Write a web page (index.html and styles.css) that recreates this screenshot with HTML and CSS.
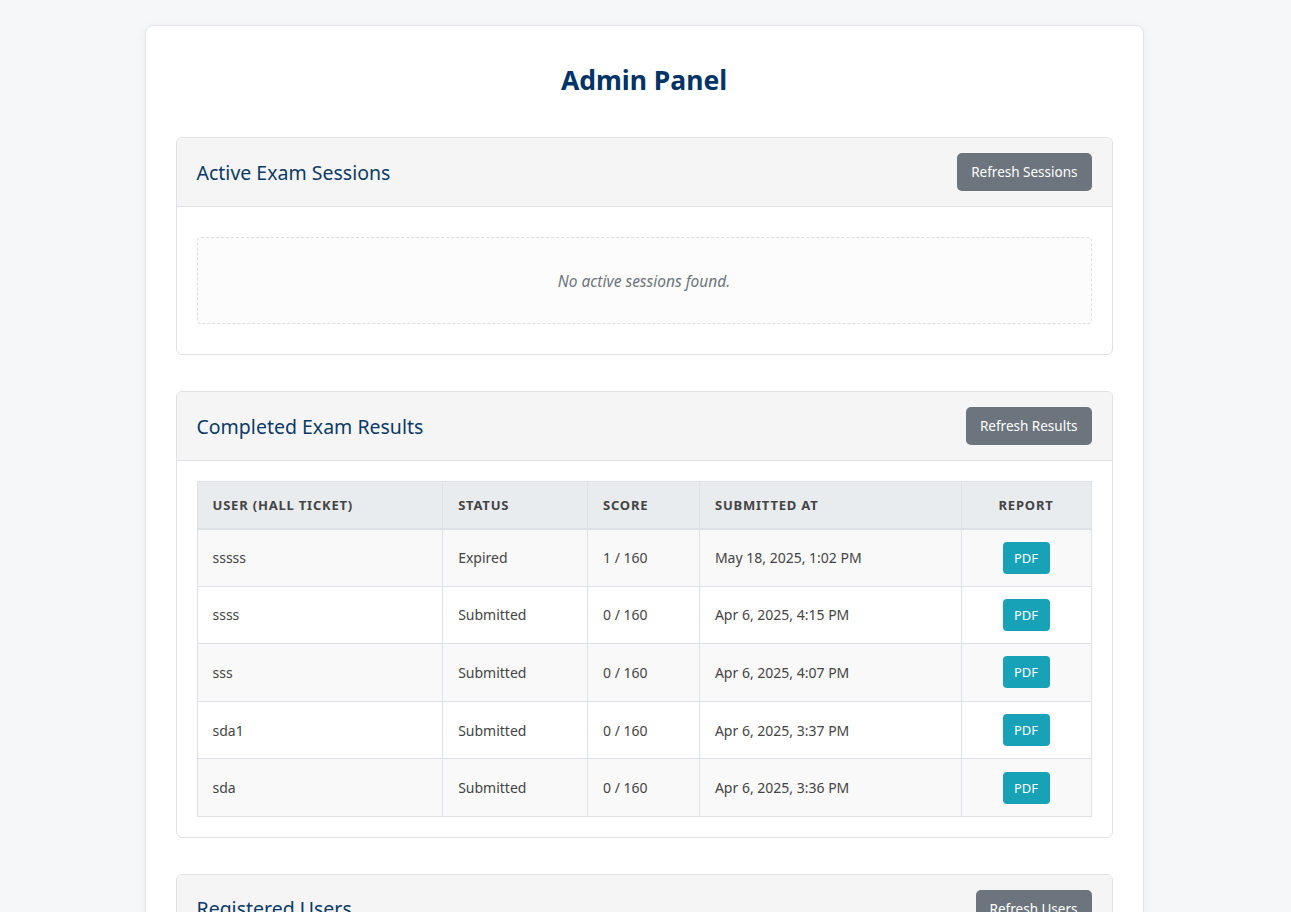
FILE: index.html
```html
<!DOCTYPE html>
<html lang="en">
<head>
<meta charset="utf-8">
<title>Admin Panel</title>
<link rel="stylesheet" href="styles.css">
</head>
<body>
<div class="container">
  <h1 class="page-title">Admin Panel</h1>

  <section class="panel">
    <div class="panel-header">
      <h2 class="panel-title">Active Exam Sessions</h2>
      <button class="btn btn-secondary">Refresh Sessions</button>
    </div>
    <div class="panel-body">
      <div class="empty-box">No active sessions found.</div>
    </div>
  </section>

  <section class="panel">
    <div class="panel-header">
      <h2 class="panel-title">Completed Exam Results</h2>
      <button class="btn btn-secondary">Refresh Results</button>
    </div>
    <div class="panel-body tight">
      <table class="data-table">
        <colgroup>
          <col class="c-user"><col class="c-status"><col class="c-score"><col class="c-date"><col class="c-report">
        </colgroup>
        <thead>
          <tr><th>User (Hall Ticket)</th><th>Status</th><th>Score</th><th>Submitted At</th><th class="center">Report</th></tr>
        </thead>
        <tbody>
          <tr><td>sssss</td><td>Expired</td><td>1 / 160</td><td>May 18, 2025, 1:02 PM</td><td class="center"><button class="btn-pdf">PDF</button></td></tr>
          <tr><td>ssss</td><td>Submitted</td><td>0 / 160</td><td>Apr 6, 2025, 4:15 PM</td><td class="center"><button class="btn-pdf">PDF</button></td></tr>
          <tr><td>sss</td><td>Submitted</td><td>0 / 160</td><td>Apr 6, 2025, 4:07 PM</td><td class="center"><button class="btn-pdf">PDF</button></td></tr>
          <tr><td>sda1</td><td>Submitted</td><td>0 / 160</td><td>Apr 6, 2025, 3:37 PM</td><td class="center"><button class="btn-pdf">PDF</button></td></tr>
          <tr><td>sda</td><td>Submitted</td><td>0 / 160</td><td>Apr 6, 2025, 3:36 PM</td><td class="center"><button class="btn-pdf">PDF</button></td></tr>
        </tbody>
      </table>
    </div>
  </section>

  <section class="panel">
    <div class="panel-header">
      <h2 class="panel-title">Registered Users</h2>
      <button class="btn btn-secondary">Refresh Users</button>
    </div>
    <div class="panel-body">
      <div class="empty-box">No registered users found.</div>
    </div>
  </section>
</div>
</body>
</html>
```

FILE: styles.css
```css
* { box-sizing: border-box; }

body {
  margin: 0;
  padding-right: 3px;
  background: #f6f7f9;
  font-family: "Noto Sans", "Open Sans", "Liberation Sans", sans-serif;
  color: #333;
}

.container {
  width: 999px;
  margin: 25px auto;
  background: #fff;
  border: 1px solid #e3e5e8;
  border-radius: 8px;
  box-shadow: 0 2px 12px rgba(0, 0, 0, 0.05);
  padding: 30px;
}

.page-title {
  margin: 0 0 33px;
  height: 48px;
  line-height: 48px;
  text-align: center;
  font-size: 26.5px;
  font-weight: 700;
  color: #003366;
}

.panel {
  border: 1px solid #dfe1e5;
  border-radius: 6px;
  margin-bottom: 36px;
  overflow: hidden;
}

.panel-header {
  display: flex;
  align-items: center;
  justify-content: space-between;
  padding: 15px 20px;
  background: #f5f5f6;
  border-bottom: 1px solid #dfe1e5;
}

.panel-title {
  margin: 0;
  font-size: 19.5px;
  font-weight: 400;
  color: #0b3a66;
}

.btn {
  font-family: inherit;
  border: none;
  border-radius: 5px;
  cursor: pointer;
}

.btn-secondary {
  background: #6c757d;
  color: #fff;
  font-size: 13.5px;
  height: 38px;
  padding: 0 14px;
}

.panel-body {
  padding: 30px 20px;
}

.panel-body.tight {
  padding: 20px;
}

.empty-box {
  border: 1px dashed #dcdee2;
  border-radius: 4px;
  background: #fcfcfc;
  height: 87px;
  display: flex;
  align-items: center;
  justify-content: center;
  font-style: italic;
  font-size: 15.5px;
  color: #6c757d;
}

.data-table {
  width: 100%;
  border-collapse: collapse;
  border: 1px solid #dee2e6;
  font-size: 14px;
  color: #444;
}

.c-user { width: 246px; }
.c-status { width: 145px; }
.c-score { width: 112px; }
.c-date { width: 262px; }
.c-report { width: 130px; }

.data-table th {
  background: #e9ecef;
  text-align: left;
  font-size: 13px;
  font-weight: 700;
  letter-spacing: 0.8px;
  text-transform: uppercase;
  color: #444;
  height: 47px;
  padding: 0 15px;
  border: 1px solid #dee2e6;
  border-bottom-width: 2px;
}

.data-table td {
  height: 57.6px;
  padding: 0 15px;
  border: 1px solid #dee2e6;
}

.data-table tbody tr:nth-child(odd) { background: #f9f9f9; }
.data-table tbody tr:nth-child(even) { background: #fff; }

.data-table .center { text-align: center; }

.btn-pdf {
  font-family: inherit;
  background: #17a2b8;
  color: #fff;
  border: none;
  border-radius: 4px;
  font-size: 13px;
  width: 47px;
  height: 32px;
  padding: 0;
  cursor: pointer;
}
```
